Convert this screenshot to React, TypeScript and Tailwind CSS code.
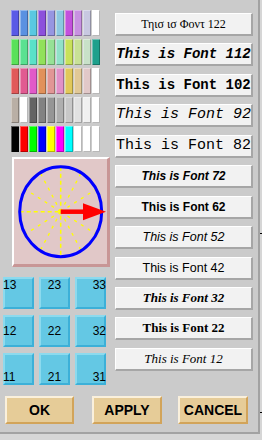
import React from "react";

const swatchRows: string[][] = [
  ["#5a5ae6", "#5a91e1", "#5ac8e1", "#8c50dc", "#9696e1", "#8cc8e1", "#c350dc", "#c891e1", "#c8c8e1", "#ffffff"],
  ["#5ae15a", "#5ae191", "#5ae1c8", "#91e15a", "#96e196", "#91e1c8", "#c8e15a", "#c8e196", "#c8e1c8", "#1ea08c"],
  ["#e15a5a", "#e15a91", "#e15ac8", "#e1915a", "#e19696", "#e191c8", "#e1c85a", "#e1c896", "#e1c8c8", "#ffffff"],
  ["#b9afa5", "#ffffff", "#646464", "#828282", "#969696", "#afafaf", "#c8c8c8", "#e1e1e1", "#f0f0f0", "#ffffff"],
  ["#000000", "#ff0000", "#00ff00", "#0000ff", "#ffff00", "#ff00ff", "#00ffff", "#ffffff", "#ffffff", "#ffffff"],
];

const fontRows = [
  { text: "Τηισ ισ Φοντ 122", cls: "font-['Liberation_Serif',serif] text-[12px]" },
  { text: "This is Font 112", cls: "font-['Liberation_Mono',monospace] text-[14px] font-bold italic" },
  { text: "This is Font 102", cls: "font-['Liberation_Mono',monospace] text-[14px] font-bold" },
  { text: "This is Font 92", cls: "font-['Liberation_Mono',monospace] text-[15px] italic" },
  { text: "This is Font 82", cls: "font-['Liberation_Mono',monospace] text-[15px]" },
  { text: "This is Font 72", cls: "font-['Liberation_Sans',sans-serif] text-[12px] font-bold italic" },
  { text: "This is Font 62", cls: "font-['Liberation_Sans',sans-serif] text-[12px] font-bold" },
  { text: "This is Font 52", cls: "font-['Liberation_Sans',sans-serif] text-[12.5px] italic" },
  { text: "This is Font 42", cls: "font-['Liberation_Sans',sans-serif] text-[12.5px]" },
  { text: "This is Font 32", cls: "font-['Liberation_Serif',serif] text-[13px] font-bold italic" },
  { text: "This is Font 22", cls: "font-['Liberation_Serif',serif] text-[13px] font-bold" },
  { text: "This is Font 12", cls: "font-['Liberation_Serif',serif] text-[13px] italic" },
];

// grid labels, top row first; place = where the label sits inside the button
const gridCells = [
  { label: "13", place: "items-start justify-start" },
  { label: "23", place: "items-start justify-center" },
  { label: "33", place: "items-start justify-end" },
  { label: "12", place: "items-center justify-start" },
  { label: "22", place: "items-center justify-center" },
  { label: "32", place: "items-center justify-end" },
  { label: "11", place: "items-end justify-start" },
  { label: "21", place: "items-end justify-center" },
  { label: "31", place: "items-end justify-end" },
];

const Compass = () => {
  const cx = 46.7;
  const cy = 52.7;
  const rx = 41;
  const ry = 45;
  const spokes = [30, 60, 120, 150, 210, 240, 300, 330];

  return (
    <svg width="93" height="105" viewBox="0 0 93 105" className="block overflow-visible">
      {spokes.map((a) => {
        const r = (a * Math.PI) / 180;
        return (
          <line
            key={a}
            x1={cx}
            y1={cy}
            x2={cx + rx * Math.cos(r)}
            y2={cy - ry * Math.sin(r)}
            stroke="#ffff00"
            strokeWidth="1.3"
            strokeDasharray="3 5"
          />
        );
      })}
      <line x1={cx} y1={cy - ry} x2={cx} y2={cy + ry} stroke="#ffff00" strokeWidth="1.5" strokeDasharray="4 3" />
      <line x1={cx - rx} y1={cy} x2={cx} y2={cy} stroke="#ffff00" strokeWidth="1.5" strokeDasharray="4 3" />
      <ellipse cx={cx} cy={cy} rx={rx} ry={ry} fill="none" stroke="#0000ff" strokeWidth="3" />
      <line x1={cx} y1={cy} x2="70" y2={cy} stroke="#ff0000" strokeWidth="4.5" />
      <polygon points={`69,${cy - 8.5} 92,${cy} 69,${cy + 8.5}`} fill="#ff0000" />
    </svg>
  );
};

export default function App() {
  return (
    <div className="flex w-[262px] h-[440px] bg-[#d6d6d6]">
      <div className="flex flex-col w-[260px] h-[434px] bg-[#cbcbcb] border-r-2 border-b-2 border-[#a2a2a2]">
        <div className="flex">
          {/* left column */}
          <div className="flex flex-col w-[115px]">
            <div className="flex flex-col gap-[3px] pl-[11px] pt-[10px]">
              {swatchRows.map((row, i) => (
                <div key={i} className="flex gap-[1px]">
                  {row.map((c, j) => (
                    <div
                      key={j}
                      className="w-[8px] h-[26px] shadow-[inset_1px_1px_0_rgba(255,255,255,0.35),inset_-1px_-1px_0_rgba(0,0,0,0.28)]"
                      style={{ backgroundColor: c }}
                    />
                  ))}
                </div>
              ))}
            </div>

            <div className="ml-[12px] mt-[5px] w-[98px] h-[110px] bg-[#e1c8c8] border-t-2 border-l-2 border-white border-r-[3px] border-b-[3px] border-r-[#c89696] border-b-[#c89696]">
              <Compass />
            </div>

            <div className="ml-[3px] mt-[10px] grid grid-cols-[31px_31px_31px] gap-x-[5px] gap-y-[6px]">
              {gridCells.map((g) => (
                <div
                  key={g.label}
                  className={`flex ${g.place} h-[32px] bg-[#64c8e4] border-2 border-t-[#8cdaee] border-l-[#8cdaee] border-r-[#3cb0d8] border-b-[#3cb0d8] font-['Liberation_Sans',sans-serif] text-[12px] leading-[12px] text-black`}
                >
                  <span className="-mx-[2px]">{g.label}</span>
                </div>
              ))}
            </div>
          </div>

          {/* font buttons */}
          <div className="flex flex-col gap-[7.45px] w-[138px] pt-[13px]">
            {fontRows.map((f) => (
              <div
                key={f.text}
                className={`h-[23px] overflow-hidden whitespace-nowrap text-center leading-[20px] text-black bg-[#f2f2f2] border-t border-l border-white border-r-2 border-b-2 border-r-[#a6a6a6] border-b-[#a6a6a6] ${f.cls}`}
              >
                {f.text}
              </div>
            ))}
          </div>
        </div>

        {/* dialog buttons */}
        <div className="flex mt-[11px] font-['Liberation_Sans',sans-serif] text-[14px] font-bold text-black">
          {[
            { t: "OK", c: "ml-[5px] w-[69px]" },
            { t: "APPLY", c: "ml-[18px] w-[70px]" },
            { t: "CANCEL", c: "ml-[16px] w-[70px]" },
          ].map((b) => (
            <div
              key={b.t}
              className={`flex items-center justify-center h-[28px] bg-[#e6cc98] border-2 border-t-[#faf0dc] border-l-[#faf0dc] border-r-[#d2a45a] border-b-[#d2a45a] ${b.c}`}
            >
              {b.t}
            </div>
          ))}
        </div>
      </div>

      {/* stray ticks at the window edge */}
      <div className="flex flex-col w-[2px]">
        <div className="mt-[233px] h-px bg-black" />
        <div className="mt-[178px] h-px bg-black" />
      </div>
    </div>
  );
}
